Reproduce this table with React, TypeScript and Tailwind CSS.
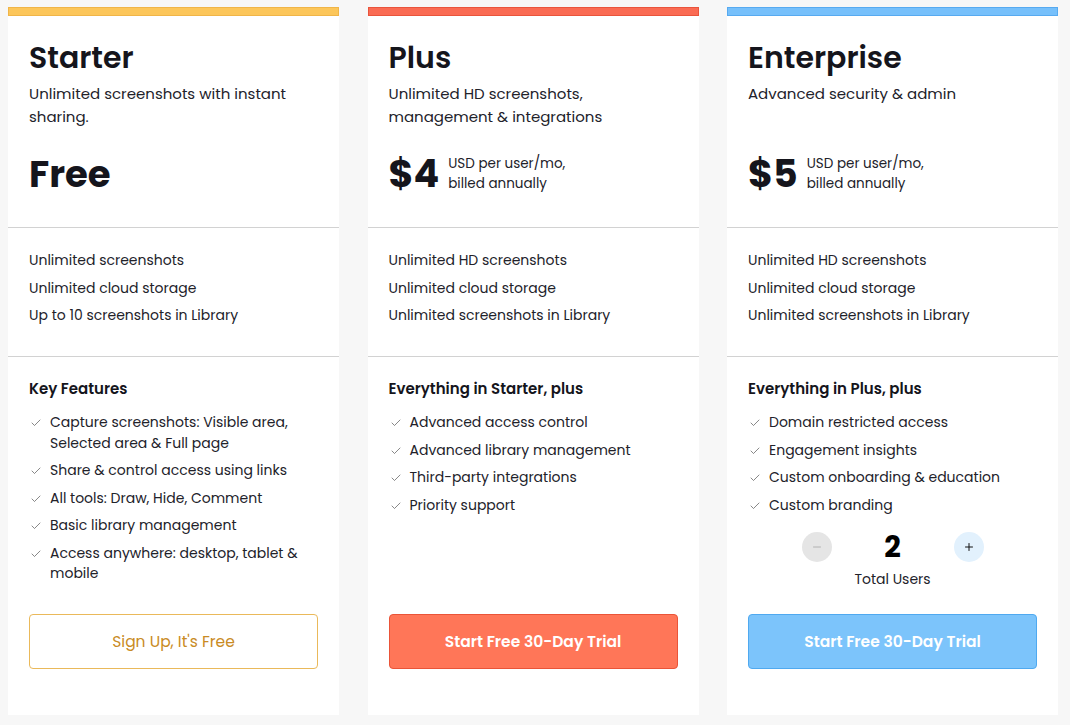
import { Check, Minus, Plus } from "lucide-react";

type Plan = {
  name: string;
  desc: string[];
  price?: string;
  bar: string;
  basics: string[];
  heading: string;
  features: string[][];
  stepper?: boolean;
  button: string;
  buttonClass: string;
};

const plans: Plan[] = [
  {
    name: "Starter",
    desc: ["Unlimited screenshots with instant", "sharing."],
    bar: "bg-[#fcc65a] border-[#f0b548]",
    basics: ["Unlimited screenshots", "Unlimited cloud storage", "Up to 10 screenshots in Library"],
    heading: "Key Features",
    features: [
      ["Capture screenshots: Visible area,", "Selected area & Full page"],
      ["Share & control access using links"],
      ["All tools: Draw, Hide, Comment"],
      ["Basic library management"],
      ["Access anywhere: desktop, tablet &", "mobile"],
    ],
    button: "Sign Up, It's Free",
    buttonClass: "bg-white border-[#eab95a] text-[#c98b24] font-normal",
  },
  {
    name: "Plus",
    desc: ["Unlimited HD screenshots,", "management & integrations"],
    price: "$4",
    bar: "bg-[#fa6b53] border-[#e9543c]",
    basics: ["Unlimited HD screenshots", "Unlimited cloud storage", "Unlimited screenshots in Library"],
    heading: "Everything in Starter, plus",
    features: [
      ["Advanced access control"],
      ["Advanced library management"],
      ["Third-party integrations"],
      ["Priority support"],
    ],
    button: "Start Free 30-Day Trial",
    buttonClass: "bg-[#ff7658] border-[#ea5438] text-white font-semibold",
  },
  {
    name: "Enterprise",
    desc: ["Advanced security & admin"],
    price: "$5",
    bar: "bg-[#76c0fb] border-[#57aaf0]",
    basics: ["Unlimited HD screenshots", "Unlimited cloud storage", "Unlimited screenshots in Library"],
    heading: "Everything in Plus, plus",
    features: [
      ["Domain restricted access"],
      ["Engagement insights"],
      ["Custom onboarding & education"],
      ["Custom branding"],
    ],
    stepper: true,
    button: "Start Free 30-Day Trial",
    buttonClass: "bg-[#7cc4fb] border-[#4fa9f0] text-white font-semibold",
  },
];

const PlanCard = ({ plan }: { plan: Plan }) => {
  return (
    <div className="flex w-[331px] flex-col bg-white">
      <div className={`h-[9px] border ${plan.bar}`} />

      {/* Header */}
      <div className="h-[212px] border-b border-[#d2d2d2] px-[21px] pt-[24px]">
        <h2 className="text-[30px] font-semibold leading-[36px] text-[#15151c]">{plan.name}</h2>
        <p className="mt-[6px] h-[46px] text-[15px] leading-[23px] text-[#22222a]">
          {plan.desc.map((l, i) => (
            <span key={i} className="block">
              {l}
            </span>
          ))}
        </p>
        {plan.price ? (
          <div className="mt-[24px] flex items-center gap-[9px]">
            <span className="text-[38px] font-bold leading-[44px] text-[#15151c]">{plan.price}</span>
            <span className="text-[13.5px] leading-[20px] text-[#22222a]">
              USD per user/mo,
              <br />
              billed annually
            </span>
          </div>
        ) : (
          <div className="mt-[24px] text-[37px] font-bold leading-[44px] text-[#15151c]">Free</div>
        )}
      </div>

      {/* Basics */}
      <div className="flex h-[129px] flex-col gap-[7px] border-b border-[#d2d2d2] px-[21px] pt-[22px]">
        {plan.basics.map((b) => (
          <div key={b} className="text-[14px] leading-[20.5px] text-[#22222a]">
            {b}
          </div>
        ))}
      </div>

      {/* Features */}
      <div className="flex flex-1 flex-col px-[21px] pb-[46px] pt-[21px]">
        <h3 className="text-[15px] font-semibold leading-[22px] text-[#15151c]">{plan.heading}</h3>
        <ul className="mt-[12px] flex flex-col gap-[7px]">
          {plan.features.map((f) => (
            <li key={f[0]} className="flex gap-[8px] text-[14px] leading-[20.5px] text-[#22222a]">
              <Check className="ml-[1px] mt-[5px] h-[12px] w-[12px] shrink-0 text-[#555]" strokeWidth={1.4} />
              <span>
                {f.map((l, i) => (
                  <span key={i} className="block">
                    {l}
                  </span>
                ))}
              </span>
            </li>
          ))}
        </ul>

        {plan.stepper && (
          <div className="mt-[15px] flex flex-col items-center">
            <div className="flex items-center gap-[46px]">
              <button className="flex h-[30px] w-[30px] items-center justify-center rounded-full bg-[#e5e5e5] text-[#a6a6a6]">
                <Minus className="h-[12px] w-[12px]" strokeWidth={1.6} />
              </button>
              <span className="w-[30px] text-center text-[29px] font-bold leading-[34px] text-black">2</span>
              <button className="flex h-[30px] w-[30px] items-center justify-center rounded-full bg-[#e2f1fd] text-[#111]">
                <Plus className="h-[12px] w-[12px]" strokeWidth={2} />
              </button>
            </div>
            <div className="mt-[5px] text-[14px] leading-[20px] text-[#22222a]">Total Users</div>
          </div>
        )}

        <button
          className={`mt-auto h-[55px] w-full rounded-[4px] border text-[15.5px] ${plan.buttonClass}`}
        >
          {plan.button}
        </button>
      </div>
    </div>
  );
};

export default function App() {
  return (
    <div
      className="flex min-h-[725px] w-[1070px] gap-[28.5px] bg-[#f7f7f7] pl-[8px] pt-[7px] pb-[10px]"
      style={{ fontFamily: "Poppins, Inter, 'Noto Sans', sans-serif" }}
    >
      {plans.map((p) => (
        <PlanCard key={p.name} plan={p} />
      ))}
    </div>
  );
}
